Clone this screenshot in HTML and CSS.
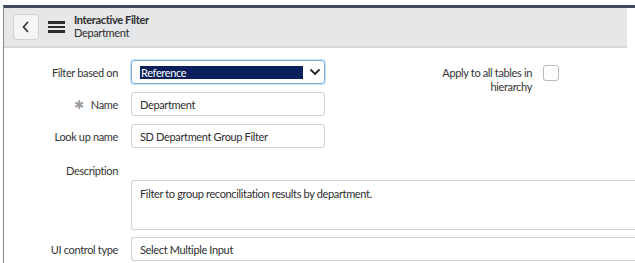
FILE: index.html
```html
<!DOCTYPE html>
<html lang="en">
<head>
    <meta charset="UTF-8">
    <title>Interactive Filter</title>
    <link rel="stylesheet" href="styles.css">
</head>
<body>
<div class="frame">
    <!-- Header -->
    <div class="header">
        <button class="back-btn">
            <svg width="10" height="12" viewBox="0 0 10 12"><path d="M7 1 L2.5 6 L7 11" fill="none" stroke="#2e2e2e" stroke-width="1.6"/></svg>
        </button>
        <div class="hamburger"><span></span><span></span><span></span></div>
        <div class="heading">
            <div class="title">Interactive Filter</div>
            <div class="subtitle">Department</div>
        </div>
    </div>

    <!-- Form -->
    <div class="form">
        <div class="row">
            <div class="field">
                <label class="label">Filter based on</label>
                <div class="select focus">
                    <span class="selected">Reference</span>
                    <svg class="chevron" width="12" height="8" viewBox="0 0 12 8"><path d="M1.5 1.5 L6 6 L10.5 1.5" fill="none" stroke="#222" stroke-width="1.8"/></svg>
                </div>
            </div>
            <div class="side">
                <label class="side-label">Apply to all tables in hierarchy</label>
                <span class="checkbox"></span>
            </div>
        </div>
        <div class="row">
            <div class="field">
                <label class="label"><span class="req">&#10033;</span>Name</label>
                <div class="input">Department</div>
            </div>
        </div>
        <div class="row">
            <div class="field">
                <label class="label">Look up name</label>
                <div class="input">SD Department Group Filter</div>
            </div>
        </div>
        <div class="row desc-row">
            <label class="label">Description</label>
        </div>
        <div class="textarea">Filter to group reconcilitation results by department.</div>
        <div class="row">
            <div class="field">
                <label class="label">UI control type</label>
                <div class="input wide">Select Multiple Input</div>
            </div>
        </div>
    </div>
</div>
</body>
</html>
```

FILE: styles.css
```css
body {
    margin: 0;
    font-family: Lato, "Liberation Sans", sans-serif;
    font-size: 11px;
    letter-spacing: -0.35px;
    color: #2e2e2e;
    background: #fff;
    overflow: hidden;
}

.frame {
    margin: 5px 0 0 3px;
    border-left: 1px solid #8a8a8a;
    border-top: 3px solid #3f4a5a;
    height: 260px;
    width: 631px;
    overflow: hidden;
}

/* Header */
.header {
    width: 614px;
    height: 38px;
    background: #e6e7e9;
    border-bottom: 2px solid #d4d5d7;
    display: flex;
    align-items: center;
    padding-left: 9px;
}

.back-btn {
    width: 26px;
    height: 26px;
    background: #f4f5f6;
    border: 1px solid #cfd1d4;
    border-radius: 4px;
    display: flex;
    align-items: center;
    justify-content: center;
    padding: 0;
}

.hamburger {
    margin-left: 9px;
    width: 17px;
    display: flex;
    flex-direction: column;
    gap: 2px;
}

.hamburger span {
    height: 2.5px;
    background: #2a2a2a;
}

.heading {
    margin-left: 9px;
    line-height: 13px;
    font-size: 11px;
    margin-top: -3px;
}

.title {
    font-weight: bold;
}

/* Form */
.form {
    padding-top: 12px;
}

.row {
    display: flex;
    align-items: flex-start;
    height: 24px;
    margin-bottom: 8px;
}

.field {
    display: flex;
    align-items: center;
}

.label {
    width: 114px;
    text-align: right;
    margin-right: 13px;
    color: #333;
}

.req {
    color: #9a9a9a;
    margin-right: 7px;
    font-size: 12px;
}

.select, .input {
    width: 184px;
    height: 22px;
    border: 1px solid #cfd1d4;
    border-radius: 3px;
    padding: 0 0 0 8px;
    display: flex;
    align-items: center;
}

.select.focus {
    border-color: #7ba7e0;
    box-shadow: 0 0 0 1px #d6e4f7;
}

.selected {
    background: #0b1f5c;
    color: #fff;
    width: 162px;
    line-height: 13px;
    padding-left: 1px;
}

.chevron {
    margin-left: 6px;
}

.input.wide {
    width: 600px;
    border-right: none;
    border-radius: 3px 0 0 3px;
}

.side {
    display: flex;
    align-items: flex-start;
    margin-left: 97px;
    padding-top: 6px;
}

.side-label {
    width: 110px;
    text-align: right;
    line-height: 14px;
    color: #333;
}

.checkbox {
    width: 14px;
    height: 14px;
    border: 1px solid #b8bbbf;
    border-radius: 3px;
    margin-left: 11px;
    margin-top: -1px;
}

.desc-row {
    height: auto;
    margin-top: 16px;
    margin-bottom: 3px;
}

.textarea {
    margin-left: 127px;
    width: 600px;
    height: 42px;
    border: 1px solid #cfd1d4;
    border-right: none;
    border-radius: 3px 0 0 3px;
    padding: 6px 0 0 8px;
    margin-bottom: 7px;
}
```
